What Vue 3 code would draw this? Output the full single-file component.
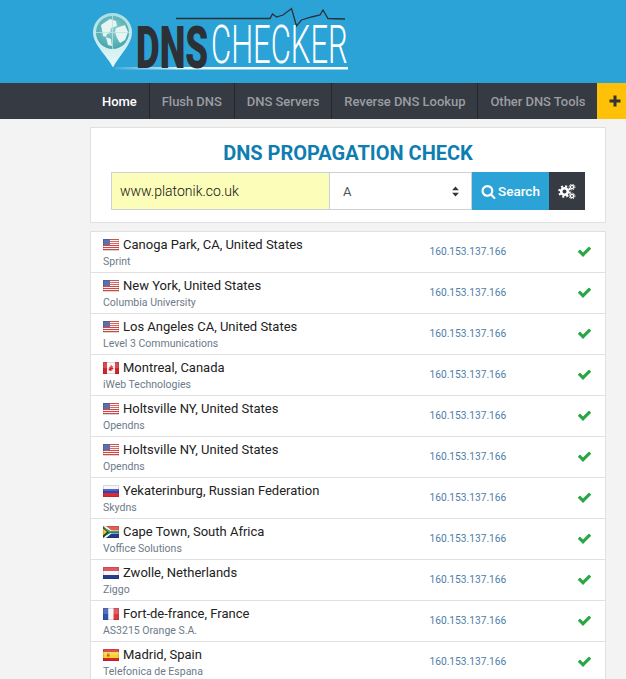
<script setup>
const rows = [
  { flag: 'us', city: 'Canoga Park, CA, United States', isp: 'Sprint' },
  { flag: 'us', city: 'New York, United States', isp: 'Columbia University' },
  { flag: 'us', city: 'Los Angeles CA, United States', isp: 'Level 3 Communications' },
  { flag: 'ca', city: 'Montreal, Canada', isp: 'iWeb Technologies' },
  { flag: 'us', city: 'Holtsville NY, United States', isp: 'Opendns' },
  { flag: 'us', city: 'Holtsville NY, United States', isp: 'Opendns' },
  { flag: 'ru', city: 'Yekaterinburg, Russian Federation', isp: 'Skydns' },
  { flag: 'za', city: 'Cape Town, South Africa', isp: 'Voffice Solutions' },
  { flag: 'nl', city: 'Zwolle, Netherlands', isp: 'Ziggo' },
  { flag: 'fr', city: 'Fort-de-france, France', isp: 'AS3215 Orange S.A.' },
  { flag: 'es', city: 'Madrid, Spain', isp: 'Telefonica de Espana' },
]
const nav = ['Home', 'Flush DNS', 'DNS Servers', 'Reverse DNS Lookup', 'Other DNS Tools']
const usStripes = [0, 2, 4, 6, 8, 10]
</script>

<template>
  <div class="page">
    <header class="top">
      <svg class="logo" width="270" height="83" viewBox="90 0 270 83">
        <defs>
          <linearGradient id="under" x1="0" x2="1" y1="0" y2="0">
            <stop offset="0" stop-color="#fff" stop-opacity="0.1" />
            <stop offset="0.3" stop-color="#fff" stop-opacity="0.9" />
            <stop offset="1" stop-color="#fff" />
          </linearGradient>
          <linearGradient id="pin" x1="0" x2="0" y1="0" y2="1">
            <stop offset="0" stop-color="#a8dfe2" />
            <stop offset="1" stop-color="#eaf8fa" />
          </linearGradient>
          <radialGradient id="globe" cx="0.5" cy="0.4" r="0.7">
            <stop offset="0" stop-color="#8fd0cf" />
            <stop offset="1" stop-color="#3b9fa6" />
          </radialGradient>
        </defs>
        <path d="M112.500 13a19.500 19.500 0 0 1 19.500 19.500c0 12-13 23-19 35c-6-12-20-23-20-35a19.500 19.500 0 0 1 19.500-19.500z" fill="url(#pin)" />
        <circle cx="112.500" cy="32.500" r="16.500" fill="url(#globe)" />
        <path d="M101 25l9-6 6 2 1 5-6 2-1 5-3 1-1 3-3-1-1-6zM116 28l9-3 3 7-3 8-5 3-3-5-2-6zM106 37l5 2 1 7-4-1z" fill="#e6f5f4" />
        <path d="M96 32.500h33M112.500 16v33" stroke="#b9e3e3" stroke-width="0.800" fill="none" />
        <rect x="115" y="67" width="233" height="2.500" fill="url(#under)" />
        <path d="M176 18.500H270L272.500 14 276.500 17 283 15 291.500 8.500 296.500 26 301.500 20 311.500 17 320 15 323 10 328 18.500 345 19" fill="none" stroke="#2c3138" stroke-width="1.300" />
        <text class="dns" transform="translate(136 68) scale(0.61 1)">DNS</text>
        <text class="checker" transform="translate(211 63) scale(0.585 1)">CHECKER</text>
      </svg>
    </header>

    <nav class="nav">
      <a v-for="(item, i) in nav" :key="item" class="nav-item" :class="{ active: i === 0 }">{{ item }}</a>
      <span class="plus">
        <svg width="12" height="12" viewBox="0 0 12 12"><path d="M4.500 0.500h3v4h4v3h-4v4h-3v-4h-4v-3h4z" fill="#333" /></svg>
      </span>
    </nav>

    <main class="main">
      <section class="card search-card">
        <h1 class="title">DNS PROPAGATION CHECK</h1>
        <div class="form">
          <div class="input">www.platonik.co.uk</div>
          <div class="select">
            <span>A</span>
            <svg width="9" height="11" viewBox="0 0 9 13"><path d="M4.500 0.500L8.500 5H.5zM4.500 12.500L.5 8H8.500z" fill="#333" /></svg>
          </div>
          <div class="btn-search">
            <svg width="15" height="15" viewBox="0 0 1792 1792"><path fill="#fff" d="M1216 832q0-185-131.500-316.500t-316.500-131.500-316.500 131.500-131.500 316.500 131.500 316.500 316.500 131.500 316.500-131.500 131.500-316.500zm512 832q0 52-38 90t-90 38q-54 0-90-38l-343-342q-179 124-399 124-143 0-273.500-55.500t-225-150-150-225-55.500-273.500 55.500-273.500 150-225 225-150 273.500-55.500 273.500 55.500 225 150 150 225 55.500 273.500q0 220-124 399l343 343q37 37 37 90z" /></svg>
            <span>Search</span>
          </div>
          <div class="btn-gear">
            <svg width="18" height="15" viewBox="0 0 18 15">
              <g fill="none" stroke="#fff">
                <circle cx="6.500" cy="7.500" r="3.300" stroke-width="2.600" />
                <circle cx="6.500" cy="7.500" r="5.300" stroke-width="2" stroke-dasharray="2.100 2.060" />
                <circle cx="14" cy="3" r="1.600" stroke-width="1.300" />
                <circle cx="14" cy="3" r="2.900" stroke-width="1" stroke-dasharray="1.300 1" />
                <circle cx="14" cy="12" r="1.600" stroke-width="1.300" />
                <circle cx="14" cy="12" r="2.900" stroke-width="1" stroke-dasharray="1.300 1" />
              </g>
            </svg>
          </div>
        </div>
      </section>

      <section class="card list">
        <div v-for="(r, i) in rows" :key="i" class="row">
          <div class="place">
            <div class="city">
              <svg class="flag" width="16" height="12" viewBox="0 0 16 12">
                <template v-if="r.flag === 'us'">
                  <rect width="16" height="12" fill="#f4f4f4" />
                  <rect v-for="y in usStripes" :key="y" y="0" :transform="`translate(0 ${y})`" width="16" height="1" fill="#d8453f" />
                  <rect width="7" height="6" fill="#3c4f94" />
                </template>
                <template v-else-if="r.flag === 'ca'">
                  <rect width="16" height="12" fill="#f6f6f6" />
                  <rect width="4" height="12" fill="#d5232b" />
                  <rect x="12" width="4" height="12" fill="#d5232b" />
                  <path d="M8 2.500l1 1.800 1-.3-.4 2 1-.2-.4 1.400-1.800.6v1.200h-.8V8.800l-1.800-.6-.4-1.400 1 .2-.4-2 1 .3z" fill="#d5232b" />
                </template>
                <template v-else-if="r.flag === 'ru'">
                  <rect width="16" height="4" fill="#f4f4f4" />
                  <rect y="4" width="16" height="4" fill="#2b44b8" />
                  <rect y="8" width="16" height="4" fill="#dc2a32" />
                </template>
                <template v-else-if="r.flag === 'za'">
                  <rect width="16" height="6" fill="#dc3b2b" />
                  <rect y="6" width="16" height="6" fill="#26378f" />
                  <path d="M0 0L8 6 0 12z" fill="#222" />
                  <path d="M0 0h3L8.500 4.500H16v3H8.500L3 12H0l7-6z" fill="#fff" />
                  <path d="M0 1L7.800 5H16v2H7.800L0 11l5.500-5z" fill="#1e8a4c" />
                  <path d="M0 2.500L4 6 0 9.500z" fill="#f4c020" />
                </template>
                <template v-else-if="r.flag === 'nl'">
                  <rect width="16" height="4" fill="#d9343c" />
                  <rect y="4" width="16" height="4" fill="#f6f6f6" />
                  <rect y="8" width="16" height="4" fill="#23408f" />
                </template>
                <template v-else-if="r.flag === 'fr'">
                  <rect width="5.500" height="12" fill="#2f54b0" />
                  <rect x="5.500" width="5" height="12" fill="#f6f6f6" />
                  <rect x="10.500" width="5.500" height="12" fill="#dc3a40" />
                </template>
                <template v-else>
                  <rect width="16" height="12" fill="#d6262d" />
                  <rect y="3" width="16" height="6" fill="#f6d22c" />
                  <rect x="4" y="4.500" width="2.500" height="3" fill="#c9562c" />
                </template>
                <rect width="16" height="6" fill="#fff" opacity="0.18" />
                <rect x=".5" y=".5" width="15" height="11" fill="none" stroke="#000" stroke-opacity="0.12" />
              </svg>
              <span>{{ r.city }}</span>
            </div>
            <div class="isp">{{ r.isp }}</div>
          </div>
          <div class="ip">160.153.137.166</div>
          <svg class="check" width="15" height="15" viewBox="0 0 1792 1792"><path fill="#28a745" d="M1671 566q0 40-28 68l-724 724-136 136q-28 28-68 28t-68-28l-136-136-362-362q-28-28-28-68t28-68l136-136q28-28 68-28t68 28l294 295 656-657q28-28 68-28t68 28l136 136q28 28 28 68z" /></svg>
        </div>
      </section>
    </main>
  </div>
</template>

<style>
html, body { margin: 0; background: #f3f3f3; }
</style>

<style scoped>
.page {
  height: 679px;
  width: 626px;
  overflow: hidden;
  background: #f3f3f3;
  font-family: Roboto, "Liberation Sans", sans-serif;
}
.top {
  height: 83px;
  background: #2ba3d7;
  padding-left: 90px;
  box-sizing: border-box;
}
.logo { display: block; }
.dns { font: 900 60px Roboto, sans-serif; fill: #2c3138; }
.checker { font: 300 53px Roboto, sans-serif; fill: #fff; }
.nav {
  height: 36px;
  background: #363a42;
  display: flex;
  padding-left: 90px;
}
.nav-item {
  display: flex;
  align-items: center;
  padding: 0 12px;
  font-size: 13px;
  font-weight: 500;
  letter-spacing: -0.04px;
  color: #9a9da2;
  border-right: 1px solid #24272c;
  white-space: nowrap;
}
.nav-item:nth-child(5) { border-right: 0; }
.nav-item.active { color: #fff; }
.plus {
  flex: 1;
  background: #ffc107;
  display: flex;
  align-items: center;
  padding-left: 12px;
}
.main {
  padding: 8px 20px 0 90px;
  display: flex;
  flex-direction: column;
  gap: 8px;
}
.card {
  background: #fff;
  border: 1px solid #e0e0e0;
}
.search-card {
  height: 96px;
  box-sizing: border-box;
  padding: 14px 20px 0;
}
.title {
  margin: 0 0 7px;
  text-align: center;
  font-size: 20px;
  line-height: 23px;
  font-weight: 700;
  color: #0e7eb0;
}
.form { display: flex; height: 38px; }
.input {
  width: 219px;
  box-sizing: border-box;
  background: #fbfdb8;
  border: 1px solid #ccd0d8;
  padding-left: 8px;
  line-height: 36px;
  font-size: 14px;
  font-weight: 300;
  color: #111;
}
.select {
  width: 142px;
  box-sizing: border-box;
  background: #fff;
  border: 1px solid #ccd0d8;
  border-left: 0;
  padding: 0 11px 0 13px;
  display: flex;
  align-items: center;
  justify-content: space-between;
  font-size: 13px;
  color: #4a5560;
}
.btn-search {
  width: 77px;
  box-sizing: border-box;
  padding-left: 9px;
  background: #2ba3d7;
  color: #fff;
  display: flex;
  align-items: center;
  gap: 2px;
  font-size: 13.500px;
  font-weight: 500;
}
.btn-gear {
  width: 36px;
  background: #363a42;
  display: flex;
  align-items: center;
  justify-content: center;
}
.row {
  height: 41px;
  box-sizing: border-box;
  border-bottom: 1px solid #e0e0e0;
  display: flex;
  align-items: center;
  padding: 0 13px 0 12px;
}
.place { width: 326.500px; }
.city {
  display: flex;
  align-items: center;
  gap: 4px;
  font-size: 13px;
  line-height: 17px;
  color: #222;
}
.isp {
  margin-top: 2px;
  font-size: 10.500px;
  line-height: 13px;
  color: #6c7a89;
}
.ip {
  flex: 1;
  font-size: 10.200px;
  color: #4d7ea8;
  margin-top: -2px;
}
.flag { flex: none; }
.check { flex: none; margin-top: -2px; }
</style>
